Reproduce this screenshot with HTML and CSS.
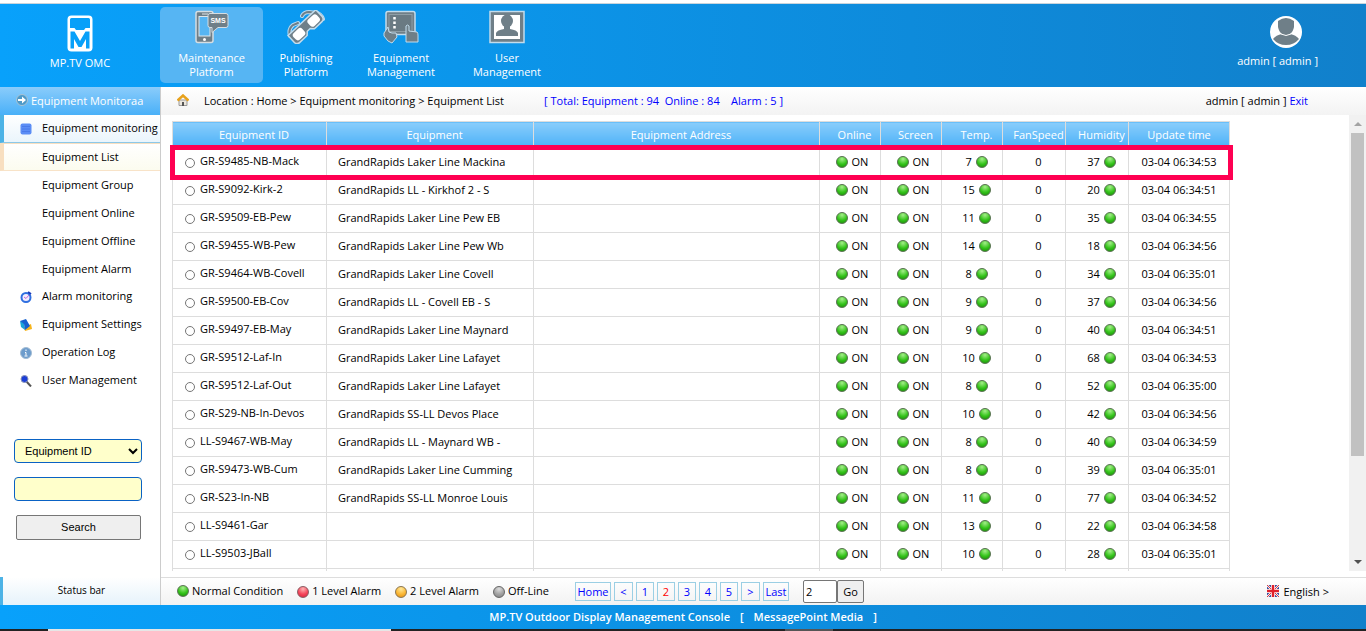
FILE: index.html
```
<!DOCTYPE html>
<html lang="en">
  <head>
    <meta charset="UTF-8" />
    <meta name="viewport" content="width=device-width, initial-scale=1.0" />
    <title>MP.TV Outdoor Display Management Console</title>
    <link rel="stylesheet" href="styles.css">
  </head>
  <body>
    <header class="top">
      <div class="brand">
        <svg width="26" height="37" viewBox="0 0 26 37">
          <rect x="0.500" y="0.500" width="25" height="36" rx="4" fill="#fff" />
          <path d="M4.500 3h17q1.500 0 1.500 1.500V13h-4.500L17 15H9l-1.500-2H3V4.500Q3 3 4.500 3z" fill="#08a0f9" />
          <path d="M3.500 33.500V16.500h4L13 26l5.500-9.500h4v17H19V24l-4.500 8h-3L7 24v9.500z" fill="#08a0f9" />
        </svg>
        <span>MP.TV OMC</span>
      </div>
      <nav class="tabs">
        <a href="#" class="tab active">
          <svg width="36" height="34" viewBox="0 0 36 34">
            <rect x="2" y="1.500" width="17" height="31" rx="2" fill="#6f7f88" stroke="#d5dde2" stroke-width="1.500" />
            <rect x="5" y="6.500" width="11" height="19.500" fill="#56b5f3" stroke="#dfe7eb" />
            <path d="M8 4h6" stroke="#dfe7eb" />
            <circle cx="10.500" cy="29.500" r="1.500" fill="#fff" />
            <path d="M16 3.500h16q2 0 2 2v10q0 2-2 2h-8l-6 5v-5h-2q-2 0-2-2v-10q0-2 2-2z" fill="#6f7f88" stroke="#d5dde2" />
            <text x="24" y="13" class="sms">SMS</text>
          </svg>
          <span>Maintenance<br />Platform</span>
        </a>
        <a href="#" class="tab">
          <svg width="38" height="34" viewBox="0 0 38 34">
            <g fill="none" stroke-linecap="round">
              <path d="M3 26q-2-7 3-11l5-2M15 6q2-4 7-4l8 1q4 1 6 6" stroke="#b9d9ee" stroke-width="4" />
              <path d="M3 26q-2-7 3-11l5-2M15 6q2-4 7-4l8 1q4 1 6 6" stroke="#6f7f88" stroke-width="2" />
            </g>
            <g transform="rotate(-43 19 17)">
              <path d="M0 11h38v9q0 4-4 4H24l-3-3h-4l-3 3H4q-4 0-4-4z" fill="#6f7f88" stroke="#c3dcec" stroke-width="1.500" />
              <rect x="3" y="13" width="12" height="9" rx="3" fill="#fff" />
              <rect x="23" y="13" width="12" height="9" rx="3" fill="#fff" />
            </g>
          </svg>
          <span>Publishing<br />Platform</span>
        </a>
        <a href="#" class="tab">
          <svg width="38" height="34" viewBox="0 0 38 34">
            <rect x="4" y="1.500" width="29" height="23" rx="2" fill="#6f7f88" stroke="#c3dcec" stroke-width="1.500" />
            <rect x="7" y="4.500" width="23" height="17" fill="#6a7a83" stroke="#8f9ea6" />
            <path d="M12.500 7v12" stroke="#fff" stroke-width="2.500" stroke-dasharray="2.500 2" />
            <path d="m2 23 4-6 1 5 3 1h4l1 4-5 6-4-2-4-5z" fill="#6f7f88" stroke="#c3dcec" />
            <path d="M24 26V16q1.500-2 3 0v5l8 1q1 1 1 3v7H24z" fill="#6f7f88" stroke="#c3dcec" />
          </svg>
          <span>Equipment<br />Management</span>
        </a>
        <a href="#" class="tab">
          <svg width="36" height="34" viewBox="0 0 36 34">
            <rect x="1" y="1.500" width="34" height="31" fill="#6f7f88" stroke="#c3dcec" stroke-width="1.500" />
            <rect x="5" y="5" width="26" height="24" fill="#fff" />
            <ellipse cx="18" cy="11" rx="6" ry="6.500" fill="#6f7f88" />
            <path d="M15 16h6v3q7 1 8 4v3H7v-3q1-3 8-4z" fill="#6f7f88" />
          </svg>
          <span>User<br />Management</span>
        </a>
      </nav>
      <div class="account">
        <svg width="32" height="32" viewBox="0 0 32 32">
          <circle cx="16" cy="16" r="16" fill="#fff" />
          <path d="M8 5q8-6 16 0v6q-1 5-4 7 6 1 9 5-5 6-13 6T3 23q3-4 9-5-3-2-4-7z" fill="#6f7f88" />
          <path d="M11 18q5 3 10 0" fill="none" stroke="#fff" />
        </svg>
        <span>admin [ admin ]</span>
      </div>
    </header>

    <div class="middle">
      <aside class="sidebar">
        <h2>
          <svg width="12" height="12" viewBox="0 0 12 12">
            <circle cx="6" cy="6" r="5.500" fill="#4d9ac9" stroke="#a9c3d4" />
            <path d="M2 5h4V2.500L10 6 6 9.500V7H2z" fill="#fff" />
          </svg>
          Equipment Monitoraa
        </h2>
        <ul class="menu">
          <li class="group open">
            <svg width="12" height="12" viewBox="0 0 12 12">
              <rect x="0.500" y="0.500" width="11" height="11" rx="2" fill="#5b8df5" />
              <path d="M2 3.500h8M2 6h8M2 8.500h8" stroke="#4a7bea" />
            </svg>
            <a href="#">Equipment monitoring</a>
          </li>
          <li class="current"><a href="#">Equipment List</a></li>
          <li><a href="#">Equipment Group</a></li>
          <li><a href="#">Equipment Online</a></li>
          <li><a href="#">Equipment Offline</a></li>
          <li><a href="#">Equipment Alarm</a></li>
          <li class="group">
            <svg width="12" height="12" viewBox="0 0 12 12">
              <circle cx="6" cy="6.500" r="4.500" fill="#f4eefc" stroke="#2f6fe0" stroke-width="2" />
              <path d="m4 6 2 1.500L9 4" fill="none" stroke="#c267d8" />
              <path d="m8 1 3 2" stroke="#1838b8" stroke-width="2" />
            </svg>
            <a href="#">Alarm monitoring</a>
          </li>
          <li class="group">
            <svg width="12" height="12" viewBox="0 0 12 12">
              <path d="m4 8 7-3 1 5-7 2z" fill="#f7b51c" />
              <path d="m0 2 4 2 1 7-4-3z" fill="#19a5d8" />
              <path d="m0 2 6-2 4 7-5 4-1-6z" fill="#1560cf" />
            </svg>
            <a href="#">Equipment Settings</a>
          </li>
          <li class="group">
            <svg width="12" height="12" viewBox="0 0 12 12">
              <circle cx="6" cy="6" r="5.500" fill="#6d9ccc" stroke="#a3bcd4" />
              <path d="M6 2.500v1.500M5 5.500h1v3M4.500 9h3" stroke="#fff" fill="none" />
            </svg>
            <a href="#">Operation Log</a>
          </li>
          <li class="group">
            <svg width="12" height="12" viewBox="0 0 12 12">
              <path d="m6 6 5 5.500" stroke="#555" stroke-width="2" />
              <circle cx="4.500" cy="4" r="3.500" fill="#1c3fd6" stroke="#8b94b8" />
            </svg>
            <a href="#">User Management</a>
          </li>
        </ul>
        <form class="search">
          <select aria-label="Search field">
            <option>Equipment ID</option>
          </select>
          <input type="text" aria-label="Search text" />
          <button type="button">Search</button>
        </form>
        <div class="status">Status bar</div>
      </aside>

      <main>
        <div class="location">
          <svg width="12" height="12" viewBox="0 0 12 12">
            <path d="M2 6h8v5.500H2z" fill="#ece7dd" stroke="#999" />
            <path d="M5 8h2v4H5z" fill="#555" />
            <path d="M.5 6.500 6 1.500l5.500 5" fill="none" stroke="#e8a21c" stroke-width="2.500" />
          </svg>
          <span class="path">Location : Home &gt; Equipment monitoring &gt; Equipment List</span>
          <span class="total">[ Total: Equipment : 94&nbsp; Online : 84 &nbsp;&nbsp; Alarm : 5 ]</span>
          <span class="who">admin [ admin ] <a href="#">Exit</a></span>
        </div>

        <div class="pane">
          <div class="list">
            <table>
              <colgroup>
                <col class="c-id" />
                <col class="c-name" />
                <col />
                <col class="c-state" />
                <col class="c-state" />
                <col class="c-state" />
                <col class="c-num" />
                <col class="c-num" />
                <col class="c-time" />
              </colgroup>
              <thead>
                <tr>
                  <th>Equipment ID</th>
                  <th>Equipment</th>
                  <th>Equipment Address</th>
                  <th>Online</th>
                  <th>Screen</th>
                  <th>Temp.</th>
                  <th>FanSpeed</th>
                  <th>Humidity</th>
                  <th class="time">Update time</th>
                </tr>
              </thead>
              <tbody id="rows"></tbody>
            </table>
          </div>
          <div class="scrollbar">
            <i class="up"></i>
            <div class="track"><div class="thumb"></div></div>
            <i class="down"></i>
          </div>
        </div>

        <div class="bottom">
          <ul class="legend">
            <li><i class="dot"></i>Normal Condition</li>
            <li><i class="dot red"></i>1 Level Alarm</li>
            <li><i class="dot orange"></i>2 Level Alarm</li>
            <li><i class="dot grey"></i>Off-Line</li>
          </ul>
          <nav class="pager">
            <a href="#" class="word">Home</a>
            <a href="#" class="arrow">&lt;</a>
            <a href="#">1</a>
            <a href="#" class="on">2</a>
            <a href="#">3</a>
            <a href="#">4</a>
            <a href="#">5</a>
            <a href="#" class="arrow">&gt;</a>
            <a href="#" class="word last">Last</a>
          </nav>
          <form class="goto">
            <input type="text" value="2" aria-label="Page number" />
            <button type="button">Go</button>
          </form>
          <a href="#" class="lang">
            <svg width="12" height="12" viewBox="0 0 12 12">
              <rect width="12" height="12" fill="#3a4f9f" />
              <path d="m0 0 12 12M12 0 0 12" stroke="#fff" stroke-width="2" />
              <path d="m0 0 12 12M12 0 0 12" stroke="#e0393e" />
              <path d="M6 0v12M0 6h12" stroke="#fff" stroke-width="4" />
              <path d="M6 0v12M0 6h12" stroke="#e0202b" stroke-width="2.500" />
            </svg>
            English &gt;
          </a>
        </div>
      </main>
    </div>

    <footer>
      <span>MP.TV Outdoor Display Management Console</span>
      <span>[</span>
      <span>MessagePoint Media</span>
      <span>]</span>
    </footer>
    <div class="edge"><i></i><i></i><i></i><i></i><i></i></div>

    <script>
      // id, equipment, temp, humidity, update time
      const items = [
        ['GR-S9485-NB-Mack', 'GrandRapids Laker Line Mackina', 7, 37, '06:34:53'],
        ['GR-S9092-Kirk-2', 'GrandRapids LL - Kirkhof 2 - S', 15, 20, '06:34:51'],
        ['GR-S9509-EB-Pew', 'GrandRapids Laker Line Pew EB', 11, 35, '06:34:55'],
        ['GR-S9455-WB-Pew', 'GrandRapids Laker Line Pew Wb', 14, 18, '06:34:56'],
        ['GR-S9464-WB-Covell', 'GrandRapids Laker Line Covell', 8, 34, '06:35:01'],
        ['GR-S9500-EB-Cov', 'GrandRapids LL - Covell EB - S', 9, 37, '06:34:56'],
        ['GR-S9497-EB-May', 'GrandRapids Laker Line Maynard', 9, 40, '06:34:51'],
        ['GR-S9512-Laf-In', 'GrandRapids Laker Line Lafayet', 10, 68, '06:34:53'],
        ['GR-S9512-Laf-Out', 'GrandRapids Laker Line Lafayet', 8, 52, '06:35:00'],
        ['GR-S29-NB-In-Devos', 'GrandRapids SS-LL Devos Place', 10, 42, '06:34:56'],
        ['LL-S9467-WB-May', 'GrandRapids LL - Maynard WB -', 8, 40, '06:34:59'],
        ['GR-S9473-WB-Cum', 'GrandRapids Laker Line Cumming', 8, 39, '06:35:01'],
        ['GR-S23-In-NB', 'GrandRapids SS-LL Monroe Louis', 11, 77, '06:34:52'],
        ['LL-S9461-Gar', '', 13, 22, '06:34:58'],
        ['LL-S9503-JBall', '', 10, 28, '06:35:01'],
      ];
      const dot = '<i class="dot"></i>';

      document.getElementById('rows').innerHTML =
        items
          .map(
            ([id, name, temp, humidity, time], i) => `
          <tr class="${i === 0 ? 'marked' : ''}">
            <td class="id"><label><input type="radio" name="device" /><span>${id}</span></label></td>
            <td class="name">${name}</td>
            <td></td>
            <td class="state">${dot} ON</td>
            <td class="state">${dot} ON</td>
            <td class="value">${temp} ${dot}</td>
            <td class="value">0</td>
            <td class="value">${humidity} ${dot}</td>
            <td>03-04 ${time}</td>
          </tr>
        `,
          )
          .join('') + '<tr>' + '<td></td>'.repeat(9) + '</tr>';
    </script>
  </body>
</html>
```
FILE: styles.css
```
* {
  box-sizing: border-box;
}
body {
  font-family: "Open Sans", "Noto Sans", sans-serif;
  font-size: 11px;
  color: #000;
  background: #fff;
  margin: 0;
  height: 100vh;
  display: flex;
  flex-direction: column;
  overflow: hidden;
}
ul {
  list-style: none;
  margin: 0;
  padding: 0;
}
a {
  color: inherit;
  text-decoration: none;
}
svg {
  flex: none;
}

/* header */
.top {
  flex: none;
  display: flex;
  height: 84px;
  margin-top: 3px;
  border-top: 1px solid #c8d4dc;
  background: linear-gradient(to right, #08a1fb, #1180cb);
  color: #fff;
  line-height: 14px;
  text-align: center;
}
.brand {
  width: 160px;
  padding-top: 11px;
}
.brand span,
.account span {
  display: block;
}
.brand span {
  margin-top: 1px;
}
.tabs {
  display: flex;
  gap: 2px;
  padding-top: 3px;
}
.tab {
  width: 104px;
  height: 76px;
  padding-top: 3px;
  border-radius: 5px;
}
.tab:first-child {
  width: 103px;
}
.tab:nth-child(2) {
  width: 82px;
}
.tab svg,
.tab span {
  display: block;
  margin: 0 auto;
}
.tab span {
  margin-top: 7px;
}
.tab.active {
  background: #56b5f3;
}
.sms {
  font: bold 7px "Liberation Sans", sans-serif;
  fill: #fff;
  text-anchor: middle;
}
.account {
  margin-left: auto;
  margin-right: 48px;
  padding-top: 12px;
}
.account svg {
  margin-left: 16px;
}
.account span {
  margin-top: 3px;
}

.middle {
  flex: 1;
  min-height: 0;
  display: flex;
}

/* sidebar */
.sidebar {
  flex: none;
  width: 161px;
  border-right: 1px solid #ccc;
  display: flex;
  flex-direction: column;
  white-space: nowrap;
}
.sidebar h2 {
  display: flex;
  align-items: center;
  gap: 3px;
  height: 28px;
  margin: 0;
  padding: 0 0 2px 16px;
  font-size: 11px;
  font-weight: normal;
  color: #fff;
  background: linear-gradient(#8accfb, #49b0f8);
}
.menu li {
  height: 28px;
  line-height: 28px;
  padding-left: 42px;
}
.menu .group {
  display: flex;
  align-items: center;
  gap: 10px;
  padding-left: 20px;
}
.menu .group a {
  margin-top: -2px;
}
.menu .open {
  padding-left: 16px;
  border-left: 4px solid #4db3e6;
  border-bottom: 1px solid #8cc8e8;
  background: linear-gradient(#fff, #eaf5fc);
}
.menu .current {
  padding-left: 38px;
  border-left: 4px solid #f8dfc0;
  border-top: 1px solid #f8dfc0;
  border-bottom: 1px solid #f8e3c8;
  background: linear-gradient(#fff, #fcfcef);
  line-height: 26px;
}
.search {
  display: flex;
  flex-direction: column;
  gap: 14px;
  margin: 44px 18px 0 14px;
}
.search select,
.search input {
  height: 24px;
  border: 1px solid #0a62c4;
  border-radius: 4px;
  background-color: #ffffcb;
  font: 11px "Liberation Sans", sans-serif;
}
.search select {
  padding-left: 6px;
}
.search button {
  height: 25px;
  margin: 0 1px 0 2px;
  padding-bottom: 2px;
  border: 1px solid #767676;
  border-radius: 2px;
  background: #efefef;
  font: 11px "Liberation Sans", sans-serif;
}
.status {
  height: 28px;
  margin-top: auto;
  border-left: 3px solid #4db3e6;
  background: linear-gradient(#fff, #e6f3fb);
  font-size: 10px;
  line-height: 27px;
  text-align: center;
}

/* content */
main {
  flex: 1;
  min-width: 0;
  display: flex;
  flex-direction: column;
}
.location {
  flex: none;
  display: flex;
  align-items: center;
  height: 28px;
  padding: 0 58px 2px 16px;
  background: linear-gradient(#fff, #f3f3f3);
}
.path {
  margin-left: 15px;
}
.total {
  margin-left: 40px;
  color: #00f;
}
.who {
  margin-left: auto;
}
.who a {
  color: #00f;
}
.pane {
  flex: 1;
  min-height: 0;
  display: flex;
  margin-bottom: 6px;
}
.list {
  flex: 1;
  overflow: hidden;
  padding: 6px 119px 0 11px;
}
table {
  width: 100%;
  table-layout: fixed;
  border-collapse: collapse;
}
.c-id {
  width: 154px;
}
.c-name {
  width: 207px;
}
.c-state {
  width: 61px;
}
.c-num {
  width: 63px;
}
.c-time {
  width: 101px;
}
th,
td {
  border: 1px solid #ddd;
  padding: 0;
  text-align: center;
  white-space: nowrap;
}
th {
  height: 27px;
  padding: 0 0 2px 9px;
  font-weight: normal;
  color: #fff;
  background: linear-gradient(#8acdfb, #49b0f8);
}
th.time {
  padding-left: 0;
}
td {
  height: 28px;
  padding-bottom: 2px;
}
.name {
  padding-left: 11px;
  text-align: left;
}
.state {
  padding-left: 4px;
}
.state .dot {
  margin-right: 1px;
}
.value {
  padding-left: 9px;
}
.value .dot {
  margin-left: 1px;
}
.id label {
  display: flex;
  align-items: center;
  gap: 5px;
  padding-left: 12px;
}
.id input {
  appearance: none;
  width: 10px;
  height: 10px;
  margin: 3px 0 0;
  border: 1px solid #767676;
  border-radius: 50%;
}
.id span {
  margin-top: -2px;
}
.marked {
  position: relative;
}
.marked .id::after {
  content: "";
  position: absolute;
  inset: -4px -3px -3px;
  border: 5px solid #ff0052;
  pointer-events: none;
}
.dot {
  display: inline-block;
  width: 12px;
  height: 12px;
  border: 1px solid #5c7355;
  border-radius: 50%;
  background: radial-gradient(circle at 50% 20%, #a5ee8a, #35c41b 55%, #168606);
  vertical-align: -2px;
}
.dot.red {
  border-color: #8a5c62;
  background: radial-gradient(circle at 50% 20%, #ffb3b3, #f5465b 55%, #d2213c);
}
.dot.orange {
  border-color: #8a7550;
  background: radial-gradient(circle at 50% 20%, #ffe89a, #fbb836 55%, #e08c10);
}
.dot.grey {
  border-color: #666;
  background: radial-gradient(circle at 50% 20%, #ddd, #a3a3a3 55%, #808080);
}

.scrollbar {
  flex: none;
  display: flex;
  flex-direction: column;
  align-items: center;
  width: 17px;
  background: #f1f1f1;
}
.scrollbar i {
  margin: 7px 0;
  border: 4px solid transparent;
}
.scrollbar .up {
  border-top: 0;
  border-bottom-color: #a3a3a3;
}
.scrollbar .down {
  border-bottom: 0;
  border-top-color: #505050;
}
.track {
  flex: 1;
  width: 13px;
}
.thumb {
  height: 77%;
  background: #c1c1c1;
}

.bottom {
  flex: none;
  display: flex;
  align-items: center;
  height: 28px;
  padding: 0 37px 1px 16px;
  border-top: 1px solid #ddd;
  background: linear-gradient(#fff, #f2f2f2);
  white-space: nowrap;
}
.legend {
  display: flex;
  gap: 14px;
  width: 398px;
  padding-bottom: 2px;
}
.legend .dot {
  margin-right: 3px;
}
.legend .red,
.legend .orange,
.legend .grey {
  vertical-align: -3px;
}
.pager {
  display: flex;
  gap: 3px;
}
.pager a {
  width: 18px;
  height: 19px;
  border: 1px solid #9bcfe4;
  color: #00f;
  line-height: 17px;
  text-align: center;
}
.pager .arrow {
  width: 19px;
}
.pager .word {
  width: 36px;
}
.pager .last {
  width: 26px;
}
.pager .on {
  color: #f00;
}
.goto {
  display: flex;
  margin-left: 14px;
}
.goto input,
.goto button {
  height: 23px;
  padding: 0 2px;
  border: 1px solid #767676;
  border-radius: 2px;
  font: 11px "Open Sans", sans-serif;
}
.goto input {
  width: 34px;
}
.goto button {
  width: 27px;
  background: #efefef;
}
.lang {
  display: flex;
  align-items: center;
  gap: 4px;
  margin-left: auto;
}

footer {
  flex: none;
  display: flex;
  justify-content: center;
  gap: 10px;
  height: 24px;
  background: linear-gradient(to right, #08a1fb, #1180cb);
  color: #fff;
  font-weight: 600;
  line-height: 24px;
}
.edge {
  flex: none;
  display: flex;
  height: 2px;
  background: #222;
}
.edge i {
  width: 48px;
}
.edge i:nth-child(2) {
  width: 343px;
  background: #e6e6e6;
}
.edge i:nth-child(3) {
  width: 394px;
}
.edge i:nth-child(4) {
  background: #555;
}
```
